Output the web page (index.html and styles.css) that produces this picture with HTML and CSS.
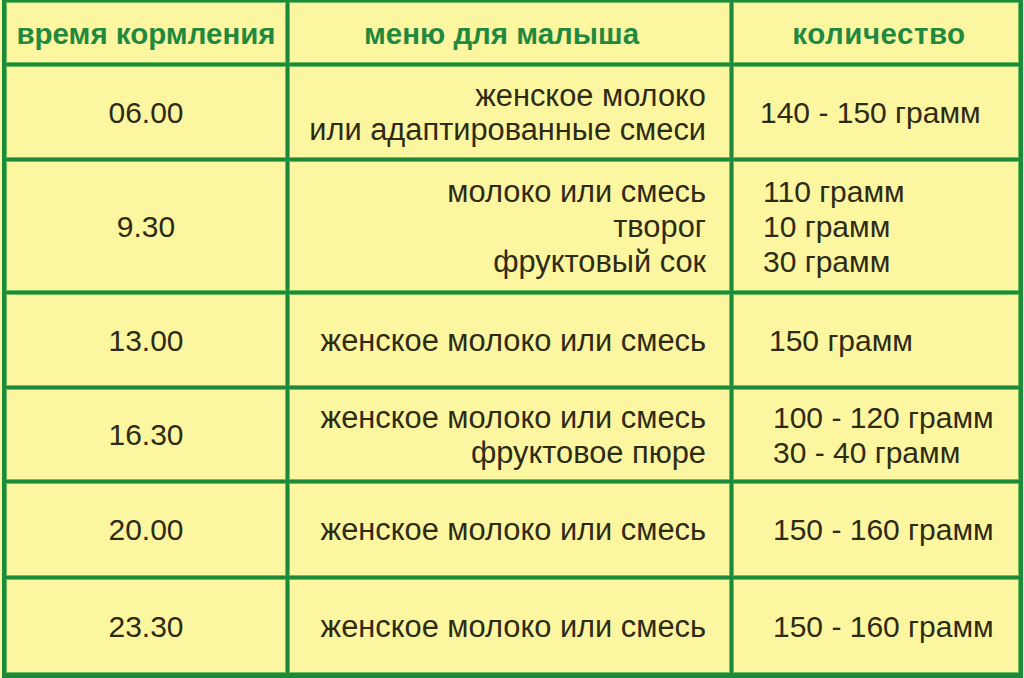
FILE: index.html
```html
<!DOCTYPE html>
<html lang="ru">
<head>
<meta charset="utf-8">
<title>Меню малыша</title>
<link rel="stylesheet" href="styles.css">
</head>
<body>
<div class="table">
  <div class="cell head">время кормления</div>
  <div class="cell head head-menu">меню для малыша</div>
  <div class="cell head head-qty">количество</div>

  <div class="cell time">06.00</div>
  <div class="cell menu tight"><span>женское молоко</span><span>или адаптированные смеси</span></div>
  <div class="cell qty p26">140 - 150 грамм</div>

  <div class="cell time">9.30</div>
  <div class="cell menu"><span>молоко или смесь</span><span>творог</span><span>фруктовый сок</span></div>
  <div class="cell qty p29"><span>110 грамм</span><span>10 грамм</span><span>30 грамм</span></div>

  <div class="cell time">13.00</div>
  <div class="cell menu"><span>женское молоко или смесь</span></div>
  <div class="cell qty p35">150 грамм</div>

  <div class="cell time">16.30</div>
  <div class="cell menu"><span>женское молоко или смесь</span><span>фруктовое пюре</span></div>
  <div class="cell qty p39"><span>100 - 120 грамм</span><span>30 - 40 грамм</span></div>

  <div class="cell time">20.00</div>
  <div class="cell menu"><span>женское молоко или смесь</span></div>
  <div class="cell qty p39">150 - 160 грамм</div>

  <div class="cell time">23.30</div>
  <div class="cell menu"><span>женское молоко или смесь</span></div>
  <div class="cell qty p39">150 - 160 грамм</div>
</div>
</body>
</html>
```

FILE: styles.css
```css
html, body {
  margin: 0;
  padding: 0;
  background: #fdf6a0;
}

.table {
  margin-left: 2px;
  width: 1021px;
  height: 678px;
  box-sizing: border-box;
  display: grid;
  grid-template-columns: 278px 439px 284px;
  grid-template-rows: 59px 90px 128px 90px 89px 91px 92px;
  gap: 5px;
  padding: 3px 5px 5px 5px;
  background: #1c8a3a;
  font-family: "Liberation Sans", Arial, sans-serif;
  font-size: 30.5px;
  color: #2e2b14;
}

.cell {
  background: #fdf6a0;
  box-shadow: 0 0 0 1px #6cbd5c;
  display: flex;
  flex-direction: column;
  justify-content: center;
  line-height: 35px;
  white-space: nowrap;
}

.head {
  align-items: center;
  font-weight: bold;
  font-size: 29.5px;
  color: #1f8a3f;
  padding-top: 2px;
}

.head-menu {
  padding-right: 16px;
}

.head-qty {
  padding-left: 6px;
  letter-spacing: 0.5px;
}

.time {
  align-items: center;
  font-size: 30px;
}

.menu {
  align-items: flex-end;
  padding-right: 23px;
  font-size: 30.8px;
}

.menu.tight {
  line-height: 34px;
  padding-top: 2px;
}

.qty {
  align-items: flex-start;
  font-size: 30px;
}

.p26 { padding-left: 26px; }
.p29 { padding-left: 29px; }
.p35 { padding-left: 35px; }
.p39 { padding-left: 39px; }
```
